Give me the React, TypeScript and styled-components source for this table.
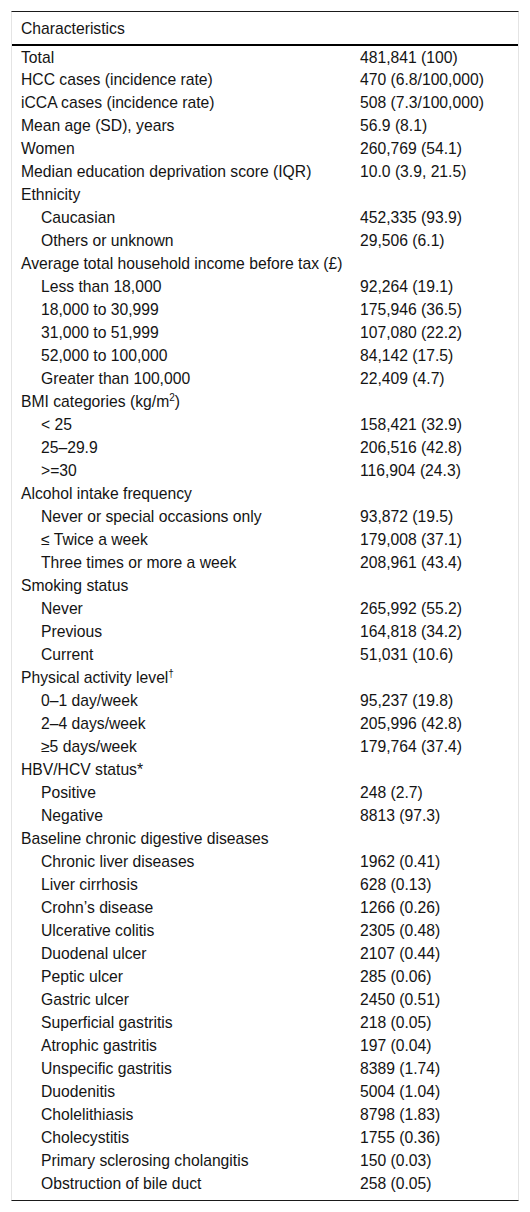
import styled, { createGlobalStyle } from "styled-components";

const GlobalStyle = createGlobalStyle`
    body {
        margin: 0;
        background: #fff;
        font-family: "Liberation Sans", Arial, sans-serif;
        color: #141414;
    }
`;

const Sup = styled.sup`
    font-size: 10px;
    line-height: 0;
    vertical-align: 6px;
`;

type Row = { label: React.ReactNode; value?: string; sub?: boolean };

const rows: Row[] = [
    { label: "Total", value: "481,841 (100)" },
    { label: "HCC cases (incidence rate)", value: "470 (6.8/100,000)" },
    { label: "iCCA cases (incidence rate)", value: "508 (7.3/100,000)" },
    { label: "Mean age (SD), years", value: "56.9 (8.1)" },
    { label: "Women", value: "260,769 (54.1)" },
    { label: "Median education deprivation score (IQR)", value: "10.0 (3.9, 21.5)" },
    { label: "Ethnicity" },
    { label: "Caucasian", value: "452,335 (93.9)", sub: true },
    { label: "Others or unknown", value: "29,506 (6.1)", sub: true },
    { label: "Average total household income before tax (£)" },
    { label: "Less than 18,000", value: "92,264 (19.1)", sub: true },
    { label: "18,000 to 30,999", value: "175,946 (36.5)", sub: true },
    { label: "31,000 to 51,999", value: "107,080 (22.2)", sub: true },
    { label: "52,000 to 100,000", value: "84,142 (17.5)", sub: true },
    { label: "Greater than 100,000", value: "22,409 (4.7)", sub: true },
    { label: <>BMI categories (kg/m<Sup>2</Sup>)</> },
    { label: "< 25", value: "158,421 (32.9)", sub: true },
    { label: "25–29.9", value: "206,516 (42.8)", sub: true },
    { label: ">=30", value: "116,904 (24.3)", sub: true },
    { label: "Alcohol intake frequency" },
    { label: "Never or special occasions only", value: "93,872 (19.5)", sub: true },
    { label: "≤ Twice a week", value: "179,008 (37.1)", sub: true },
    { label: "Three times or more a week", value: "208,961 (43.4)", sub: true },
    { label: "Smoking status" },
    { label: "Never", value: "265,992 (55.2)", sub: true },
    { label: "Previous", value: "164,818 (34.2)", sub: true },
    { label: "Current", value: "51,031 (10.6)", sub: true },
    { label: <>Physical activity level<Sup>†</Sup></> },
    { label: "0–1 day/week", value: "95,237 (19.8)", sub: true },
    { label: "2–4 days/week", value: "205,996 (42.8)", sub: true },
    { label: "≥5 days/week", value: "179,764 (37.4)", sub: true },
    { label: "HBV/HCV status*" },
    { label: "Positive", value: "248 (2.7)", sub: true },
    { label: "Negative", value: "8813 (97.3)", sub: true },
    { label: "Baseline chronic digestive diseases" },
    { label: "Chronic liver diseases", value: "1962 (0.41)", sub: true },
    { label: "Liver cirrhosis", value: "628 (0.13)", sub: true },
    { label: "Crohn’s disease", value: "1266 (0.26)", sub: true },
    { label: "Ulcerative colitis", value: "2305 (0.48)", sub: true },
    { label: "Duodenal ulcer", value: "2107 (0.44)", sub: true },
    { label: "Peptic ulcer", value: "285 (0.06)", sub: true },
    { label: "Gastric ulcer", value: "2450 (0.51)", sub: true },
    { label: "Superficial gastritis", value: "218 (0.05)", sub: true },
    { label: "Atrophic gastritis", value: "197 (0.04)", sub: true },
    { label: "Unspecific gastritis", value: "8389 (1.74)", sub: true },
    { label: "Duodenitis", value: "5004 (1.04)", sub: true },
    { label: "Cholelithiasis", value: "8798 (1.83)", sub: true },
    { label: "Cholecystitis", value: "1755 (0.36)", sub: true },
    { label: "Primary sclerosing cholangitis", value: "150 (0.03)", sub: true },
    { label: "Obstruction of bile duct", value: "258 (0.05)", sub: true },
];

const TableBox = styled.div`
    margin: 11px 0 0 11px;
    width: 506px;
    padding-bottom: 5px;
    border-top: 1px solid #1a1a1a;
    border-bottom: 1px solid #1a1a1a;
    border-left: 1px solid #e4e4e4;
    border-right: 1px solid #e4e4e4;
`;

const Table = styled.table`
    width: 100%;
    table-layout: fixed;
    border-collapse: collapse;
    font-size: 15.7px;
    line-height: 17px;
`;

const Col = styled.col<{ $w?: number }>`
    width: ${(p) => (p.$w ? `${p.$w}px` : "auto")};
`;

const HeadCell = styled.th`
    height: 32px;
    padding: 0 9px;
    text-align: left;
    font-weight: normal;
    border-bottom: 2px solid #000;
`;

const BodyRow = styled.tr`
    height: 23px;
`;

const LabelCell = styled.td<{ $sub: boolean }>`
    padding: 0 0 0 ${(p) => (p.$sub ? "29px" : "9px")};
    white-space: nowrap;
`;

const ValueCell = styled.td`
    padding: 0;
    white-space: nowrap;
`;

export default function App() {
    return (
        <>
            <GlobalStyle />
            <TableBox>
                <Table>
                    <colgroup>
                        <Col $w={348} />
                        <Col />
                    </colgroup>
                    <thead>
                        <tr>
                            <HeadCell colSpan={2}>Characteristics</HeadCell>
                        </tr>
                    </thead>
                    <tbody>
                        {rows.map((r, i) => (
                            <BodyRow key={i}>
                                <LabelCell $sub={!!r.sub}>{r.label}</LabelCell>
                                <ValueCell>{r.value ?? ""}</ValueCell>
                            </BodyRow>
                        ))}
                    </tbody>
                </Table>
            </TableBox>
        </>
    );
}
